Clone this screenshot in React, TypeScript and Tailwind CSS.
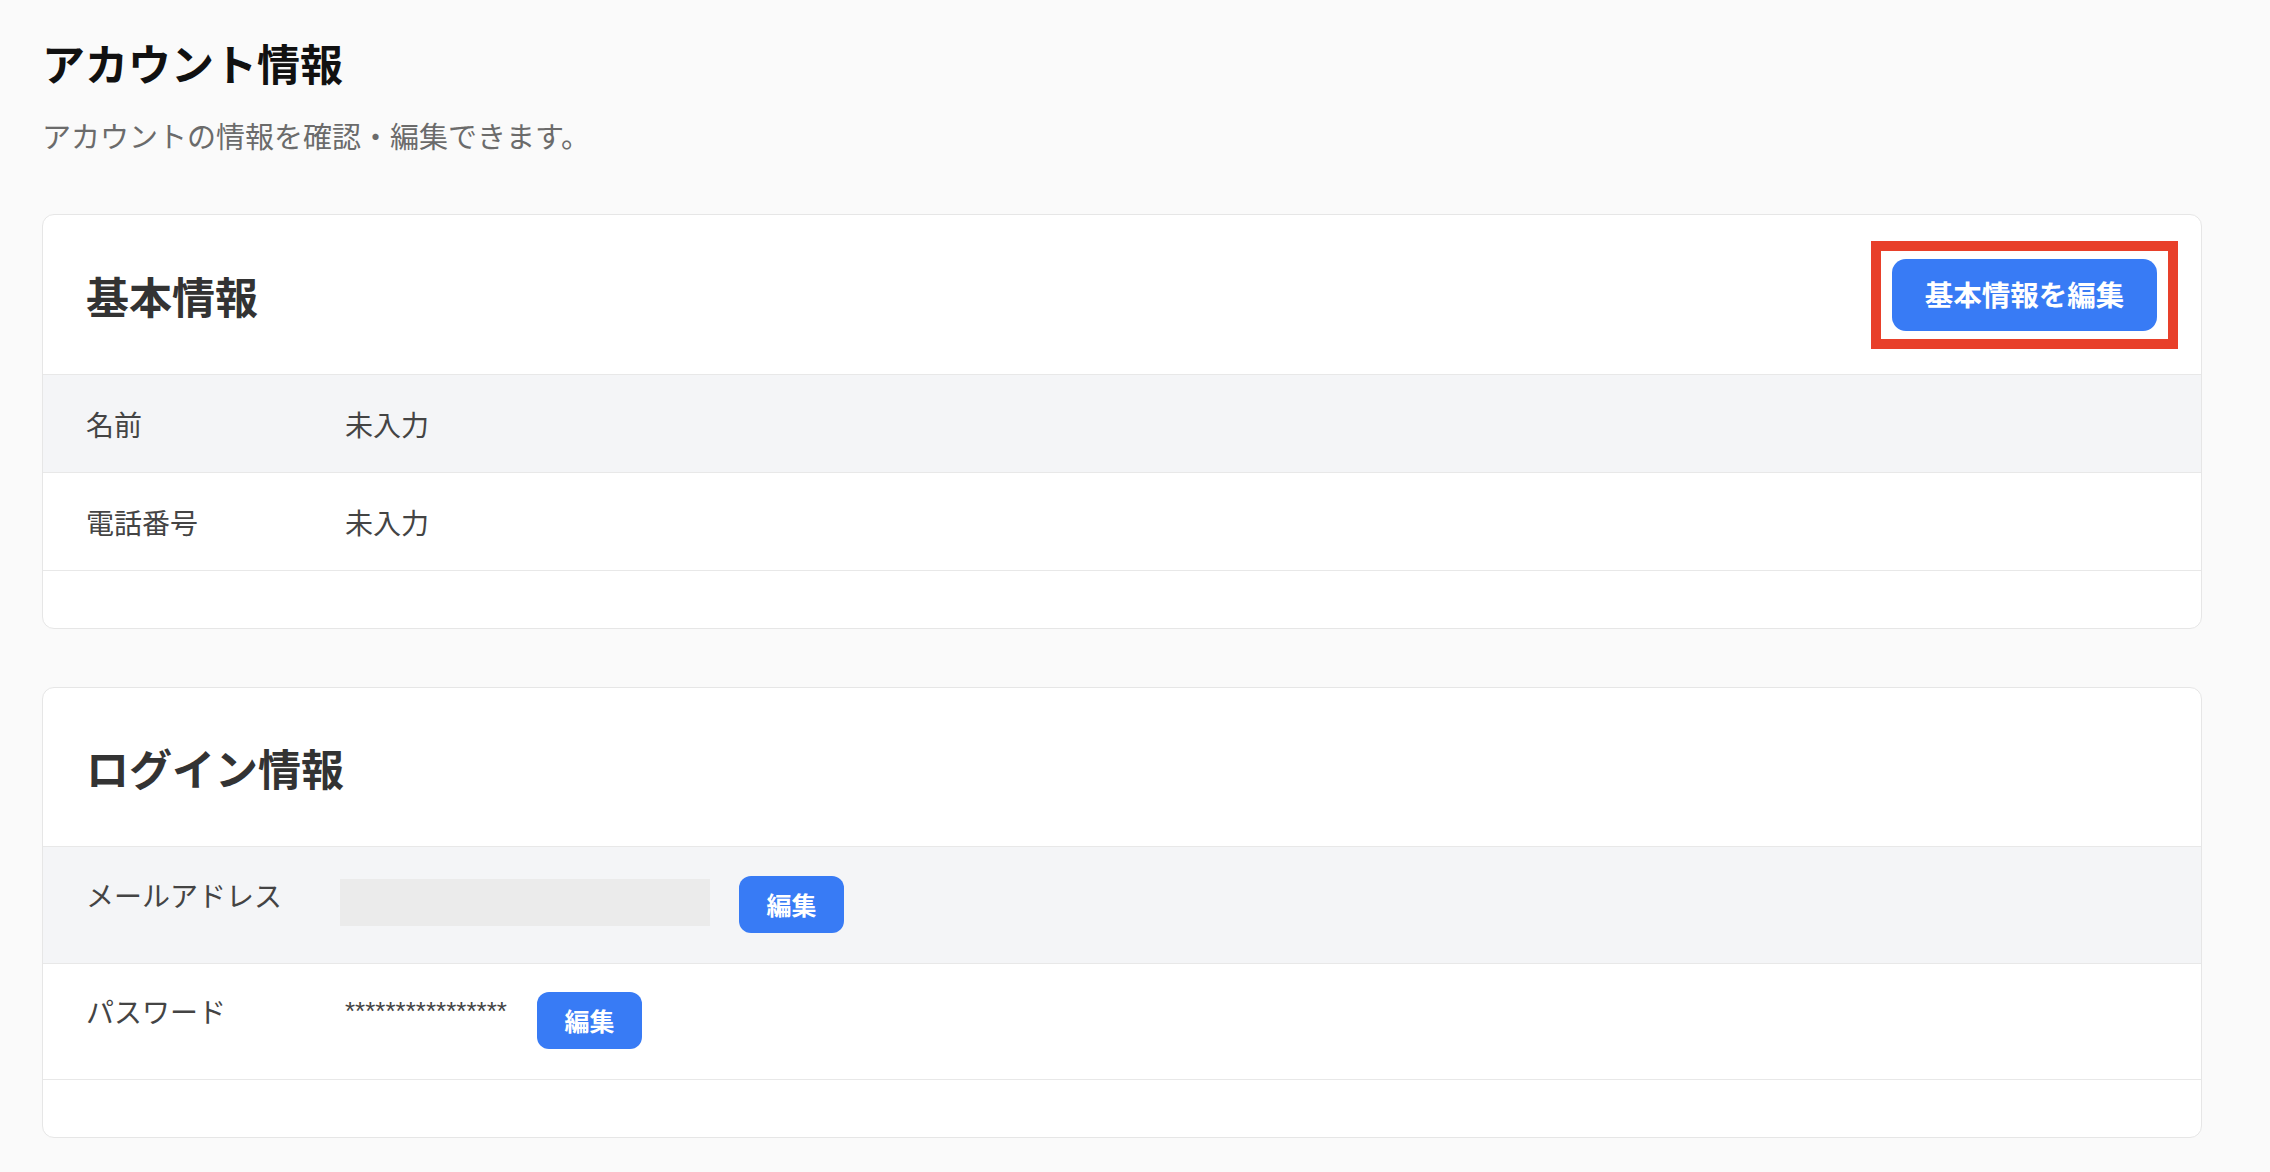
const basicRows = [
  { label: '名前', value: '未入力', shaded: true },
  { label: '電話番号', value: '未入力', shaded: false },
]

const EditButton = () => (
  <button className="flex h-[57px] w-[105px] shrink-0 items-center justify-center rounded-[12px] bg-[#387bf5] text-[25px] font-semibold leading-none text-white">
    編集
  </button>
)

export default function App() {
  return (
    <div className="min-h-screen bg-[#fafafa] pl-[42px] pr-[68px] pt-[32px] pb-[34px] font-['Noto_Sans_CJK_JP',sans-serif]">
      <h1 className="text-[43px] font-bold leading-[60px] text-[#111]">アカウント情報</h1>
      <p className="mt-[22px] text-[29px] leading-[42px] text-[#6b6b6b]">
        アカウントの情報を確認・編集できます。
      </p>

      <section className="mt-[58px] overflow-hidden rounded-[12px] border border-[#e6e6e6] bg-white">
        <header className="flex h-[159px] items-center justify-between pl-[43px] pr-[44px]">
          <h2 className="text-[43px] font-bold leading-[60px] text-[#333]">基本情報</h2>
          <div className="relative">
            <span className="pointer-events-none absolute -left-[21px] -right-[21px] -top-[18px] -bottom-[18px] border-[10px] border-[#e8402a]" />
            <button className="flex h-[72px] w-[265px] items-center justify-center rounded-[14px] bg-[#387bf5] text-[28.5px] font-bold leading-none text-white">
              基本情報を編集
            </button>
          </div>
        </header>

        {basicRows.map((row) => (
          <div
            key={row.label}
            className={`flex h-[98px] items-center border-t border-[#e8e8e8] pl-[43px] pr-[44px] text-[28px] leading-[38px] text-[#444] ${row.shaded ? 'bg-[#f4f5f7]' : 'bg-white'}`}
          >
            <div className="w-[259px] shrink-0">{row.label}</div>
            <div>{row.value}</div>
          </div>
        ))}
        <div className="h-[58px] border-t border-[#e8e8e8]" />
      </section>

      <section className="mt-[58px] overflow-hidden rounded-[12px] border border-[#e6e6e6] bg-white">
        <header className="flex h-[158px] items-center pl-[43px] pr-[44px]">
          <h2 className="text-[43px] font-bold leading-[60px] text-[#333]">ログイン情報</h2>
        </header>

        <div className="flex h-[117px] items-start border-t border-[#e8e8e8] bg-[#f4f5f7] pl-[43px] pr-[44px] pt-[29px] text-[28px] leading-[38px] text-[#444]">
          <div className="w-[254px] shrink-0">メールアドレス</div>
          <div className="flex items-start gap-x-[29px]">
            <div className="mt-[3px] h-[47px] w-[370px] bg-[#ebebeb]" />
            <EditButton />
          </div>
        </div>

        <div className="flex h-[116px] items-start border-t border-[#e8e8e8] bg-white pl-[43px] pr-[44px] pt-[28px] text-[28px] leading-[38px] text-[#444]">
          <div className="w-[254px] shrink-0">パスワード</div>
          <div className="flex items-start gap-x-[30px]">
            <span className="pl-[5px] font-['Liberation_Sans',sans-serif] text-[26px] leading-[38px]">
              ****************
            </span>
            <EditButton />
          </div>
        </div>
        <div className="h-[58px] border-t border-[#e8e8e8]" />
      </section>
    </div>
  )
}
